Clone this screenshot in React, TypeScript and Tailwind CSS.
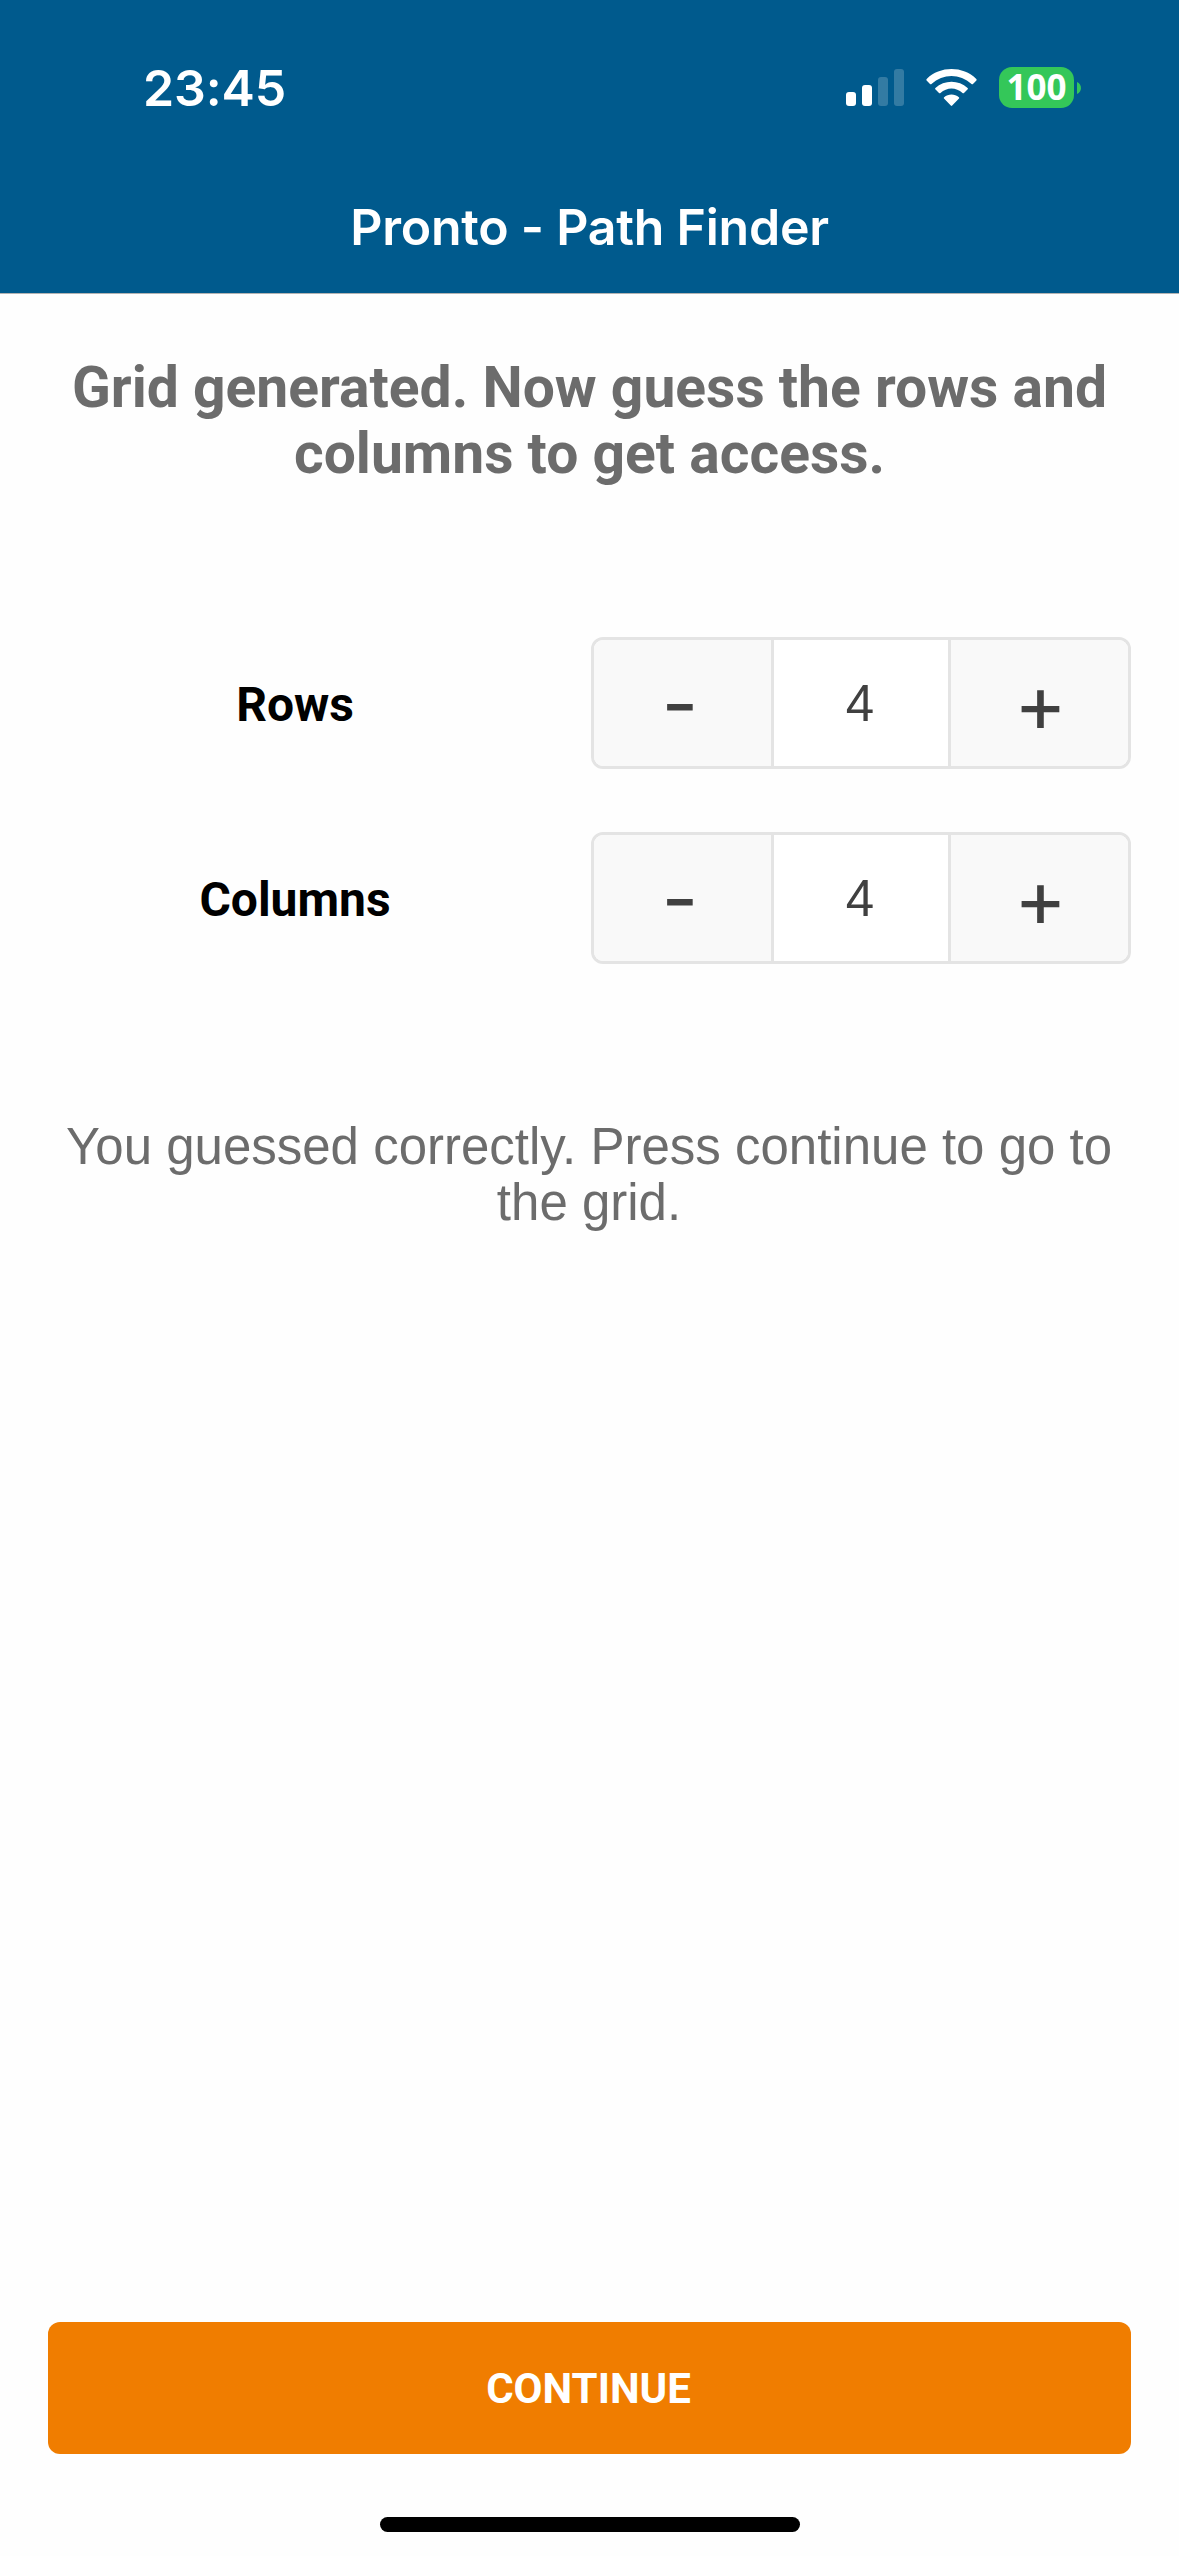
import React, { useState } from "react";

function SignalIcon() {
  return (
    <svg width="58" height="38" viewBox="0 0 58 38" fill="#fff" aria-hidden="true">
      <rect x="0" y="23" width="10" height="14" rx="3" />
      <rect x="16" y="16" width="10" height="21" rx="3" />
      <rect x="32" y="8" width="10" height="29" rx="3" opacity="0.2" />
      <rect x="48" y="0" width="10" height="37" rx="3" opacity="0.2" />
    </svg>
  );
}

function WifiIcon() {
  return (
    <svg width="51" height="38" viewBox="0 0 51 38" fill="#fff" aria-hidden="true">
      <path d="M0.6 11.6Q0 10.8 0.7 10C14 -3.2 37 -3.2 50.3 10Q51 10.8 50.4 11.6L47 15Q46.3 15.6 45.5 15C34 4.2 17 4.2 5.5 15Q4.7 15.6 4 15Z" />
      <path d="M9.3 20.3Q8.7 19.6 9.4 18.9C18.3 10.6 32.7 10.6 41.6 18.9Q42.3 19.6 41.7 20.3L38 24Q37.2 24.6 36.5 24C30.2 18 20.8 18 14.5 24Q13.8 24.6 13 24Z" />
      <path d="M18 29.6Q17.4 28.9 18.1 28.3C22.4 24.5 28.6 24.5 32.9 28.3Q33.6 28.9 33 29.6L26.2 36.6Q25.5 37.2 24.8 36.6Z" />
    </svg>
  );
}

function Battery() {
  return (
    <div className="flex items-center gap-[3px]">
      <div className="flex h-[41px] w-[75px] items-center justify-center rounded-[13px] bg-[#34c759] pb-px font-['Noto_Sans',sans-serif] text-[35px] leading-[40px] font-bold text-white">
        100
      </div>
      <svg width="4" height="12" viewBox="0 0 4 12" fill="#34c759" aria-hidden="true">
        <path d="M0 0C5.3 2 5.3 10 0 12Z" />
      </svg>
    </div>
  );
}

function Stepper({ label }: { label: string }) {
  const [value, setValue] = useState(4);
  return (
    <div className="flex h-[132px] items-center">
      <div className="w-[590px] pt-[3px] text-center text-[48px] leading-[60px] font-bold text-black">
        {label}
      </div>
      <div className="ml-px flex h-[132px] w-[540px] overflow-hidden rounded-[12px] border-[3px] border-[#e4e4e4] bg-white text-[#404040]">
        <button
          className="w-[177px] bg-[#f9f9f9] pr-[5px] text-center font-[Inter] text-[80px] leading-[126px]"
          onClick={() => setValue(value - 1)}
        >
          -
        </button>
        <div className="w-[180px] border-x-[3px] border-[#e4e4e4] pt-px pr-[2px] text-center font-['Liberation_Sans'] text-[51px] leading-[126px]">
          {value}
        </div>
        <button
          className="w-[177px] bg-[#f9f9f9] pb-[4px] pl-[2px] text-center font-[Inter] text-[80px] leading-[126px]"
          onClick={() => setValue(value + 1)}
        >
          +
        </button>
      </div>
    </div>
  );
}

export default function App() {
  return (
    <div className="flex h-[2556px] w-[1179px] flex-col overflow-hidden bg-[#fefefe] font-[Roboto,sans-serif]">
      <header className="h-[294px] shrink-0 border-b border-[#b3b3b3] bg-[#005a8d] font-[Inter,sans-serif] text-white">
        <div className="flex h-[175px] items-center justify-between pr-[98px] pl-[143px]">
          <span className="text-[50px] leading-[60px] font-semibold tracking-[-0.1px]">23:45</span>
          <div className="flex items-center">
            <SignalIcon />
            <div className="w-[22px]" />
            <WifiIcon />
            <div className="w-[22px]" />
            <Battery />
          </div>
        </div>
        <h1 className="h-[104px] text-center text-[50px] leading-[104px] font-semibold tracking-[-0.23px]">
          Pronto - Path Finder
        </h1>
      </header>

      <main className="flex flex-1 flex-col">
        <h2 className="mt-[61px] text-center text-[57px] leading-[66px] font-bold text-[#6c6c6c]">
          Grid generated. Now guess the rows and
          <br />
          columns to get access.
        </h2>

        <div className="mt-[150px] flex flex-col gap-[63px]">
          <Stepper label="Rows" />
          <Stepper label="Columns" />
        </div>

        <p className="mt-[155px] pr-px text-center font-['Liberation_Sans',sans-serif] text-[51px] leading-[56px] text-[#6c6c6c]">
          You guessed correctly. Press continue to go to
          <br />
          the grid.
        </p>

        <button className="mx-12 mt-auto h-[132px] rounded-[12px] bg-[#f07d00] pt-px pr-[2px] text-center text-[42px] font-bold text-white">
          CONTINUE
        </button>
        <div className="mx-auto mt-[63px] mb-6 h-[15px] w-[420px] rounded-full bg-black" />
      </main>
    </div>
  );
}
